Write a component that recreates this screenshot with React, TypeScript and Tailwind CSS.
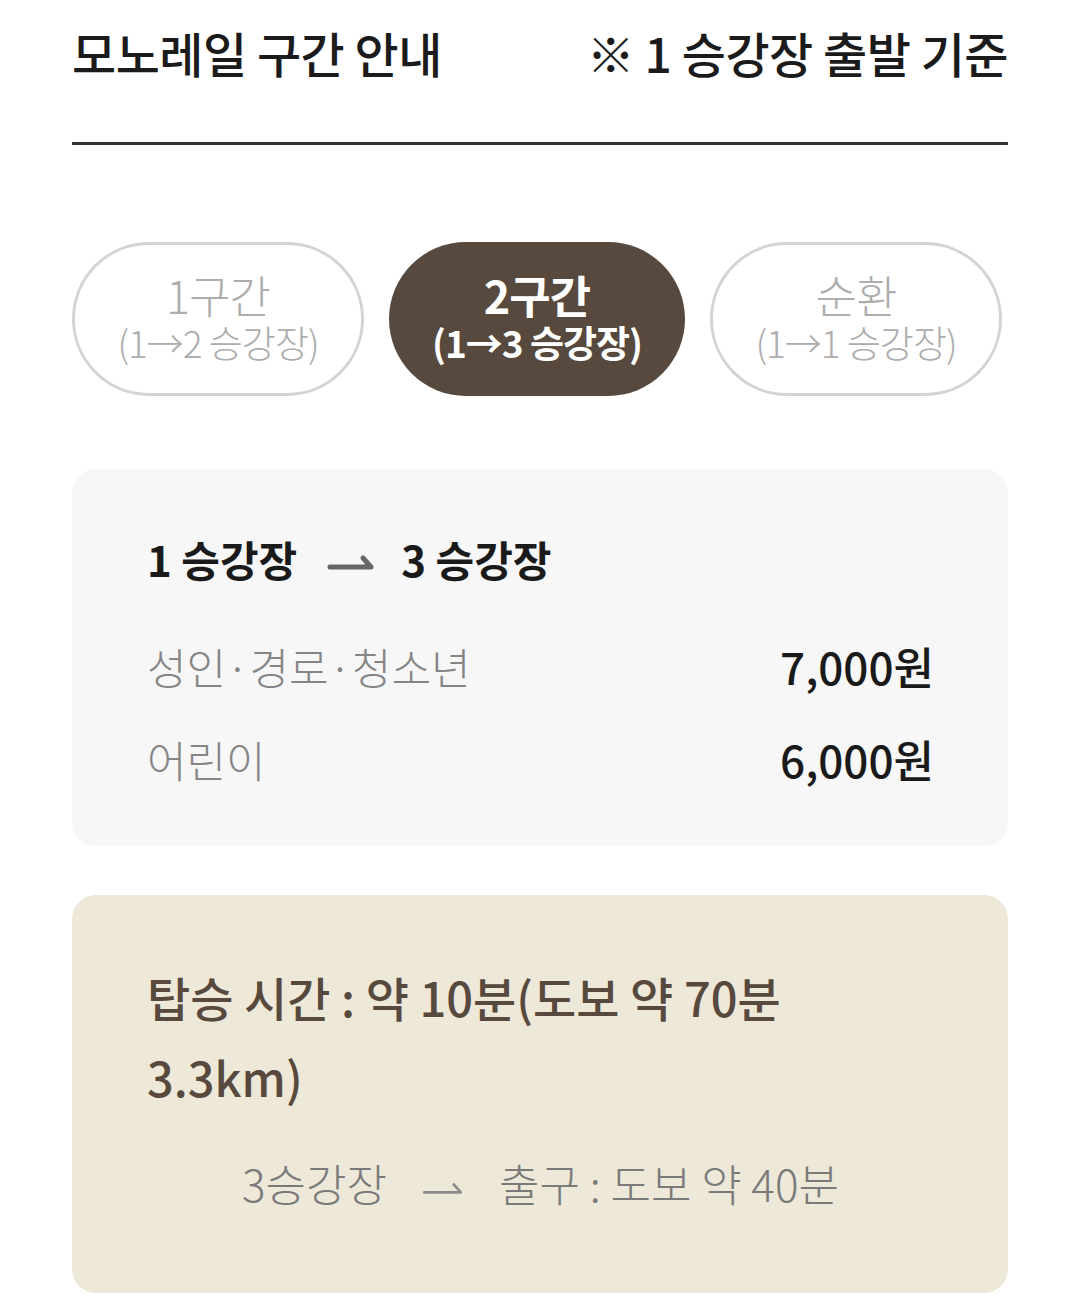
import React from "react"

const font = { fontFamily: '"Noto Sans CJK KR", "Noto Sans", sans-serif' }

const tabs = [
  { title: "1구간", sub: "(1→2 승강장)", active: false, w: "w-[292px]" },
  { title: "2구간", sub: "(1→3 승강장)", active: true, w: "w-[296px]" },
  { title: "순환", sub: "(1→1 승강장)", active: false, w: "w-[292px]" },
]

function Harpoon({ className, strokeWidth }: { className?: string; strokeWidth: number }) {
  return (
    <svg viewBox="0 0 48 18" className={className} fill="none">
      <path
        d="M3 14 H44 L36 5"
        stroke="currentColor"
        strokeWidth={strokeWidth}
        strokeLinecap="round"
        strokeLinejoin="round"
      />
    </svg>
  )
}

export default function App() {
  return (
    <div className="bg-white min-h-[1298px] px-[72px]" style={font}>
      <div className="flex justify-between items-center h-[104px] text-[#1b1b1b] font-medium tracking-[-0.5px]">
        <h1 className="text-[48px]">모노레일 구간 안내</h1>
        <span className="text-[48px]">※ 1 승강장 출발 기준</span>
      </div>
      <div className="h-[3px] bg-[#333] mt-[38px]" />

      <div className="flex gap-[25px] mt-[97px]">
        {tabs.map((t) => (
          <button
            key={t.title}
            className={`${t.w} h-[154px] pb-[4px] rounded-full flex flex-col items-center justify-center ${
              t.active
                ? "bg-[#57493d] text-white font-bold"
                : "border-[3px] border-[#d4d4d4] text-[#adadad] font-light"
            }`}
          >
            <span className="text-[45px] leading-[49px] tracking-[-1px]">{t.title}</span>
            <span className="text-[37px] leading-[46px] tracking-[-1px]">{t.sub}</span>
          </button>
        ))}
      </div>

      <div className="mt-[73px] bg-[#f7f7f7] rounded-[24px] h-[377px] pl-[75px] pr-[74px] pt-[62px]">
        <div className="flex items-center text-[42px] font-bold text-[#1a1a1a] leading-[56px]">
          <span>1 승강장</span>
          <Harpoon className="w-[48px] h-[18px] ml-[30px] mr-[26px] mt-[6px] text-[#666]" strokeWidth={5} />
          <span>3 승강장</span>
        </div>
        <div className="mt-[49px] flex justify-between items-center leading-[60px]">
          <span className="text-[43px] font-light text-[#858585]">성인·경로·청소년</span>
          <span className="text-[44px] font-medium text-[#1a1a1a]">7,000원</span>
        </div>
        <div className="mt-[33px] flex justify-between items-center leading-[60px]">
          <span className="text-[43px] font-light text-[#858585]">어린이</span>
          <span className="text-[44px] font-medium text-[#1a1a1a]">6,000원</span>
        </div>
      </div>

      <div className="mt-[49px] mb-[5px] bg-[#ede8d8] rounded-[24px] h-[398px] pl-[75px] pr-[74px] pt-[62px]">
        <p className="text-[47px] font-medium text-[#57493d] leading-[80px] max-w-[700px]">
          탑승 시간 : 약 10분(도보 약 70분 3.3km)
        </p>
        <div className="mt-[36px] flex justify-center items-center text-[44px] leading-[60px] font-light text-[#7a7a7a]">
          <span>3승강장</span>
          <Harpoon className="w-[48px] h-[16px] mx-[32px] mt-[10px] text-[#8a8a8a]" strokeWidth={3} />
          <span>출구 : 도보 약 40분</span>
        </div>
      </div>
    </div>
  )
}
